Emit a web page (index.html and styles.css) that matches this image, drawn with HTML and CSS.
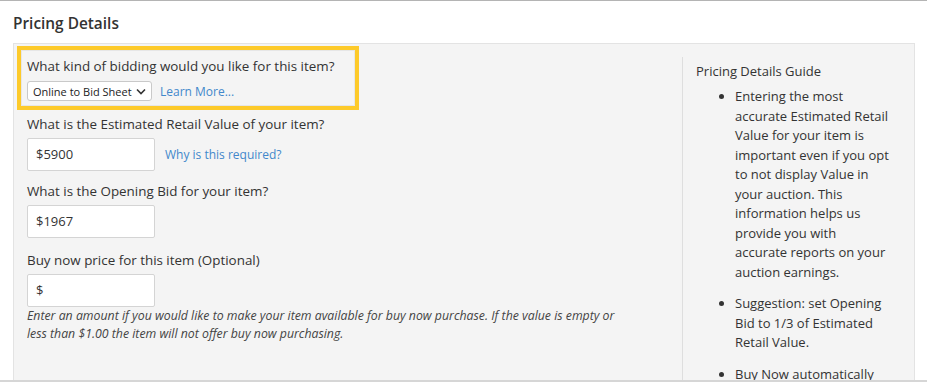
FILE: index.html
```html
<!DOCTYPE html>
<html lang="en">
<head>
  <meta charset="UTF-8" />
  <title>Pricing Details</title>
  <meta name="viewport" content="width=device-width, initial-scale=1.0" />
  <link rel="stylesheet" href="styles.css">
</head>
<body>
  <div class="page">
    <h2 class="section-title">Pricing Details</h2>

    <div class="panel">
      <div class="form-col">
        <div class="group highlight">
          <label class="label">What kind of bidding would you like for this item?</label>
          <div class="select-row">
            <div class="select">
              <span>Online to Bid Sheet</span>
              <svg width="10" height="7" viewBox="0 0 10 7"><path d="M1 1.5 L5 5.5 L9 1.5" fill="none" stroke="#333" stroke-width="1.6"/></svg>
            </div>
            <a class="link" href="#">Learn More...</a>
          </div>
        </div>

        <div class="group first">
          <label class="label">What is the Estimated Retail Value of your item?</label>
          <div class="input-row">
            <div class="input">$5900</div>
            <a class="link" href="#">Why is this required?</a>
          </div>
        </div>

        <div class="group">
          <label class="label">What is the Opening Bid for your item?</label>
          <div class="input-row">
            <div class="input">$1967</div>
          </div>
        </div>

        <div class="group last">
          <label class="label">Buy now price for this item (Optional)</label>
          <div class="input-row">
            <div class="input">$</div>
          </div>
          <p class="help">Enter an amount if you would like to make your item available for buy now purchase. If the value is empty or less than $1.00 the item will not offer buy now purchasing.</p>
        </div>
      </div>

      <div class="guide-col">
        <div class="guide-title">Pricing Details Guide</div>
        <ul class="guide-list">
          <li>Entering the most accurate Estimated Retail Value for your item is important even if you opt to not display Value in your auction. This information helps us provide you with accurate reports on your auction earnings.</li>
          <li>Suggestion: set Opening Bid to 1/3 of Estimated Retail Value.</li>
          <li>Buy Now automatically ends bidding when purchased.</li>
        </ul>
      </div>
    </div>
  </div>
</body>
</html>
```

FILE: styles.css
```css
* {
  box-sizing: border-box;
}

html, body {
  height: 100%;
}

body {
  margin: 0;
  background-color: #fff;
  color: #333;
  font-family: 'Open Sans', 'Noto Sans', sans-serif;
  font-size: 13px;
  border-top: 1px solid #b4b4b4;
  border-bottom: 2px solid #d6d6d6;
  overflow: hidden;
}

.page {
  padding-left: 13px;
}

.section-title {
  margin: 12px 0 8px;
  font-size: 15.4px;
  font-weight: 600;
  line-height: 22px;
  color: #333;
}

.panel {
  display: flex;
  width: 902px;
  background-color: #f4f4f4;
  border: 1px solid #e3e3e3;
  min-height: 400px;
}

.form-col {
  width: 668px;
  padding-left: 13px;
  padding-top: 2px;
}

.group {
  margin-top: 10px;
}

.group.first {
  margin-top: 4px;
}

.group.last {
  margin-top: 12px;
}

.highlight {
  margin: 0 0 0 -10px;
  width: 342px;
  border: 4px solid #fdca2a;
  box-shadow: inset 0 0 0 1px #e6e6e6;
  padding: 6px 6px 5px;
}

.label {
  display: block;
  font-size: 13.4px;
  line-height: 20px;
}

.select-row {
  display: flex;
  align-items: center;
  gap: 8px;
  margin-top: 5px;
}

.select {
  display: flex;
  align-items: center;
  justify-content: space-between;
  flex-shrink: 0;
  width: 125px;
  height: 20px;
  padding: 0 5px 0 5px;
  background-color: #fff;
  border: 1px solid #c9c9c9;
  border-radius: 3px;
  font-size: 11px;
  white-space: nowrap;
  color: #222;
}

.link {
  color: #4288cb;
  font-size: 12px;
  text-decoration: none;
  white-space: nowrap;
}

.input-row {
  display: flex;
  align-items: center;
  gap: 10px;
  margin-top: 4px;
}

.input {
  width: 128px;
  height: 33px;
  line-height: 31px;
  padding-left: 8px;
  background-color: #fff;
  border: 1px solid #d4d4d4;
  border-radius: 2px;
  color: #333;
}

.help {
  margin: 0;
  max-width: 600px;
  font-size: 12.3px;
  font-style: italic;
  line-height: 18px;
  color: #444;
}

.guide-col {
  width: 232px;
  margin-top: 13px;
  padding: 4px 25px 0 13px;
  border-left: 1px solid #dedede;
}

.guide-title {
  line-height: 20px;
}

.guide-list {
  margin: 6px 0 0;
  padding-left: 39px;
  line-height: 19.5px;
}

.guide-list li {
  margin-bottom: 12px;
}
```
